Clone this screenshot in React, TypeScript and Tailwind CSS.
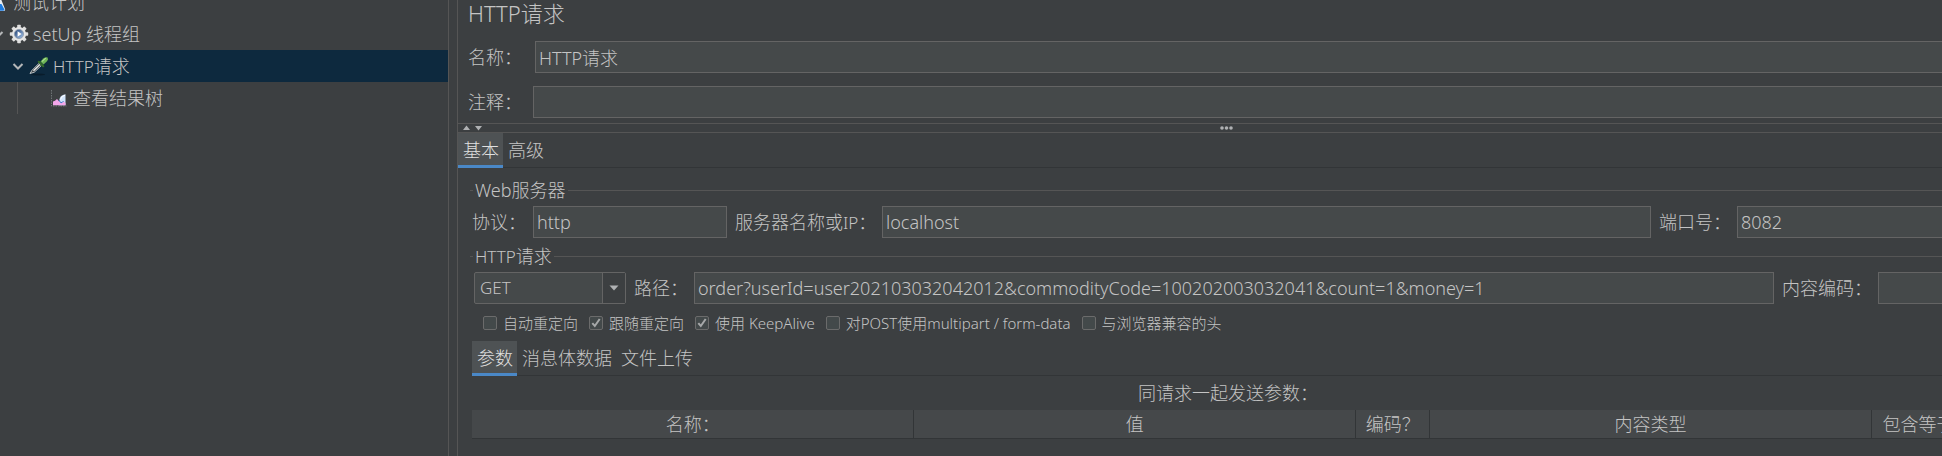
import type { ReactNode } from "react";

const INPUT =
  "h-8 min-w-0 border border-[#646464] bg-[#45494a] px-[3px] text-[18px] leading-[30px] text-[#c4c4c4] outline-none";

/* Latin runs are set one step smaller than the Chinese text around them. */
function Latin({ children }: { children: ReactNode }) {
  return <span className="text-[17px]">{children}</span>;
}

function Chevron() {
  return (
    <svg viewBox="0 0 12 12" className="size-3" fill="none" stroke="#b4b6b8" strokeWidth="2">
      <path d="M1.5 4l4.5 4.5L10.500 4" />
    </svg>
  );
}

function PlanIcon() {
  return (
    <svg viewBox="0 0 20 20" className="size-5">
      <path d="M8 1h4v6l4 10q.6 2-1.500 2h-10Q2.400 19 3 17L8 7z" fill="#e8eef4" />
      <path d="M6 12h6.500l2.900 5.500q0 1.200-1.400 1.200H5z" fill="#1d7be0" />
    </svg>
  );
}

function GearIcon() {
  const teeth = [0, 45, 90, 135, 180, 225, 270, 315];
  return (
    <svg viewBox="0 0 20 20" className="size-5">
      <defs>
        <linearGradient id="hub" x1="0" y1="0" x2="1" y2="1">
          <stop offset="0" stopColor="#1d3d70" />
          <stop offset="1" stopColor="#a9c8ee" />
        </linearGradient>
      </defs>
      {teeth.map((a) => (
        <rect key={a} x="8.200" y=".8" width="3.600" height="4" rx=".8" fill="#dedede" transform={`rotate(${a} 10 10)`} />
      ))}
      <circle cx="10" cy="10" r="7" fill="#e6e6e6" />
      <circle cx="10" cy="10" r="4.600" fill="url(#hub)" stroke="#8d99aa" strokeWidth=".8" />
      <path d="M8.600 7.300l4 2.700-4 2.700z" fill="#fff" />
    </svg>
  );
}

function DropperIcon() {
  return (
    <svg viewBox="0 0 20 20" className="size-5">
      <ellipse cx="9" cy="18.500" rx="7" ry="1" fill="#000" opacity=".3" />
      <path d="M1 17.500l2-3.200 7-7 2.300 2.300-7 6.600z" fill="#3c4347" stroke="#c8ccce" strokeWidth=".9" />
      <path d="M4.500 14.800l6.600-6.400" stroke="#f4f4f4" strokeWidth="1.300" />
      <path d="M9.800 5.800l4.400 4.400" stroke="#356a2b" strokeWidth="2.200" strokeLinecap="round" />
      <path d="M11.500 5.500l3.200-3.300q2.200-1.700 3.900-.6 1.100 1.900-.6 3.700l-3.500 3.200z" fill="#6fb556" />
      <path d="M13.500 5l3-2.600" stroke="#a9dc8f" strokeWidth="1.200" strokeLinecap="round" />
    </svg>
  );
}

function ResultIcon() {
  return (
    <svg viewBox="0 0 20 20" className="size-5">
      <path d="M2.500 2v16h15" fill="none" stroke="#6f7476" strokeWidth="1" strokeDasharray="1.500 1" />
      <path d="M10 13q.5-6 6.500-6.800v11H10z" fill="#cfe3fb" />
      <path d="M11.500 11.500q1-3.500 4.500-4.300" stroke="#fff" fill="none" />
      <path d="M4 17.300v-3.800q2-.5 4-2.500l3.500 4q1.500 1 3-1.500l2 1.500v2.300z" fill="#f3a6ea" />
      <path d="M10 12l1.500 2.500q1.500 1 3-1.500" stroke="#3d6fc4" fill="none" strokeWidth="1" />
    </svg>
  );
}

function TreeRow({
  indent,
  icon,
  open,
  selected,
  children,
}: {
  indent: string;
  icon: ReactNode;
  open?: boolean;
  selected?: boolean;
  children: ReactNode;
}) {
  return (
    <div
      role="treeitem"
      aria-selected={!!selected}
      className={`flex h-8 items-center whitespace-nowrap ${indent} ${selected ? "bg-[#0d293e]" : ""}`}
    >
      <span className="mr-[5px] w-3 shrink-0">{open && <Chevron />}</span>
      <span className="mr-1 shrink-0">{icon}</span>
      <span>{children}</span>
    </div>
  );
}

function Tabs({ items }: { items: string[] }) {
  return (
    <div role="tablist" className="flex h-[35px] bg-[linear-gradient(#323537,#323537)] bg-[length:100%_1px] bg-[position:0_34px] bg-no-repeat">
      {items.map((t, i) => (
        <button
          key={t}
          type="button"
          role="tab"
          aria-selected={i === 0}
          className={
            i === 0
              ? "h-[35px] border-b-[3px] border-[#4a88c7] bg-[#4e5254] pt-[2px] pr-1 pl-[5px] text-[#e0e0e0]"
              : "h-[35px] border-b-[3px] border-transparent pt-[2px] pr-1 pl-[5px]"
          }
        >
          {t}
        </button>
      ))}
    </div>
  );
}

function GroupTitle({ children }: { children: ReactNode }) {
  return (
    <div className="flex h-6 items-center">
      <span className="h-px w-[3px] bg-[#555555]" />
      <h2 className="mr-[2px] ml-[2px] leading-6">{children}</h2>
      <span className="h-px flex-1 bg-[#555555]" />
    </div>
  );
}

function Check({ checked, children }: { checked?: boolean; children: ReactNode }) {
  return (
    <label className="flex items-center gap-[6px] whitespace-nowrap">
      <span className="grid size-[14px] shrink-0">
        <input
          type="checkbox"
          defaultChecked={checked}
          className="peer col-start-1 row-start-1 size-[14px] appearance-none rounded-[2px] border border-[#6b6b6b] bg-[#43494a]"
        />
        <svg
          viewBox="0 0 14 14"
          className="pointer-events-none invisible col-start-1 row-start-1 size-[14px] peer-checked:visible"
          fill="none"
          stroke="#a7a9aa"
          strokeWidth="2"
        >
          <path d="M3.300 7.200l2.500 2.800L10.700 3" />
        </svg>
      </span>
      <span>{children}</span>
    </label>
  );
}

export default function App() {
  return (
    <div className="flex min-h-screen overflow-hidden bg-[#3c3f41] font-['Noto_Sans','Noto_Sans_CJK_SC',sans-serif] text-[18px] leading-6 font-light text-[#c4c4c4]">
      <nav aria-label="测试计划" className="w-[449px] shrink-0 overflow-hidden border-r border-[#555555]">
        <div role="tree" className="-mt-[14px] -ml-12">
          <TreeRow indent="pl-5" icon={<PlanIcon />} open>
            测试计划
          </TreeRow>
          <TreeRow indent="pl-10" icon={<GearIcon />} open>
            setUp 线程组
          </TreeRow>
          <TreeRow indent="pl-[60px]" icon={<DropperIcon />} open selected>
            <Latin>HTTP</Latin>请求
          </TreeRow>
          <div className="ml-[65px] border-l border-[#555555]">
            <TreeRow indent="pl-[14px]" icon={<ResultIcon />}>
              查看结果树
            </TreeRow>
          </div>
        </div>
      </nav>

      <main className="-mr-[53px] ml-2 min-w-0 flex-1 border-l border-[#555555]">
        <header className="pb-[5px] pl-[10px]">
          <h1 className="h-[41px] text-[22px] leading-[26px]">HTTP请求</h1>
          <div className="flex items-center">
            <label htmlFor="name" className="w-[67px] shrink-0">
              名称：
            </label>
            <input id="name" defaultValue="HTTP请求" className={`${INPUT} flex-1`} />
          </div>
          <div className="mt-[13px] flex items-center">
            <label htmlFor="comment" className="w-[65px] shrink-0">
              注释：
            </label>
            <input id="comment" className={`${INPUT} flex-1`} />
          </div>
        </header>

        <div className="grid h-[10px] grid-cols-3 items-center border-y border-[#555555]">
          <svg viewBox="0 0 20 6" className="ml-[5px] h-[6px] w-5" fill="#afb1b3">
            <path d="M0 5l3.500-4.500L7 5zM12 1h7l-3.500 4.500z" />
          </svg>
          <svg viewBox="0 0 13 4" className="h-1 w-[13px] justify-self-center" fill="#afb1b3">
            <circle cx="2" cy="2" r="1.800" />
            <circle cx="6.500" cy="2" r="1.800" />
            <circle cx="11" cy="2" r="1.800" />
          </svg>
        </div>

        <Tabs items={["基本", "高级"]} />

        <section className="pt-[10px] pr-[11px] pl-3">
          <GroupTitle>Web服务器</GroupTitle>
          <div className="mt-1 flex items-center pr-[2px] pl-[2px]">
            <label htmlFor="protocol" className="w-[61px] shrink-0">
              协议：
            </label>
            <input id="protocol" defaultValue="http" className={`${INPUT} w-[194px]`} />
            <label htmlFor="server" className="ml-2 w-[147px] shrink-0">
              服务器名称或<Latin>IP</Latin>：
            </label>
            <input id="server" defaultValue="localhost" className={`${INPUT} flex-1`} />
            <label htmlFor="port" className="ml-2 w-[78px] shrink-0">
              端口号：
            </label>
            <input id="port" defaultValue="8082" className={`${INPUT} w-[245px]`} />
          </div>

          <div className="mt-[6px]">
            <GroupTitle>
              <Latin>HTTP</Latin>请求
            </GroupTitle>
          </div>
          <div className="mt-1 flex items-center pr-[2px] pl-1">
            <div className="grid w-[152px] shrink-0 grid-cols-[minmax(0,1fr)_24px]">
              <select
                aria-label="方法"
                className="col-span-2 col-start-1 row-start-1 h-8 appearance-none rounded-[2px] border border-[#646464] bg-[#45494a] pl-[5px] text-[17px] leading-[30px] text-[#c4c4c4] outline-none"
              >
                <option>GET</option>
              </select>
              <span className="pointer-events-none col-start-2 row-start-1 my-px mr-px flex items-center justify-center border-l border-[#646464] bg-[#3c3f41]">
                <svg viewBox="0 0 10 6" className="h-[6px] w-[10px]" fill="#afb1b3">
                  <path d="M.5.5h9L5 5.500z" />
                </svg>
              </span>
            </div>
            <label htmlFor="path" className="ml-2 w-[60px] shrink-0">
              路径：
            </label>
            <input
              id="path"
              defaultValue="order?userId=user202103032042012&commodityCode=100202003032041&count=1&money=1"
              className={`${INPUT} flex-1`}
            />
            <label htmlFor="encoding" className="ml-2 w-24 shrink-0">
              内容编码：
            </label>
            <input id="encoding" className={`${INPUT} w-[104px]`} />
          </div>

          <div className="mt-[9px] flex h-5 items-center gap-[11px] pl-[13px] text-[15px] leading-5">
            <Check>自动重定向</Check>
            <Check checked>跟随重定向</Check>
            <Check checked>使用 KeepAlive</Check>
            <Check>对POST使用multipart / form-data</Check>
            <Check>与浏览器兼容的头</Check>
          </div>

          <div className="mt-2 pl-[2px]">
            <Tabs items={["参数", "消息体数据", "文件上传"]} />
            <table className="w-full table-fixed border-collapse">
              <caption className="h-[34px] leading-[34px]">同请求一起发送参数：</caption>
              <colgroup>
                <col />
                <col />
                <col className="w-[74px]" />
                <col />
                <col className="w-[112px]" />
              </colgroup>
              <thead>
                <tr className="h-7 bg-[#45484a]">
                  {["名称：", "值", "编码？", "内容类型", "包含等于？"].map((h) => (
                    <th
                      key={h}
                      scope="col"
                      className="border-r border-b border-[#323537] px-0 pt-[2px] pb-0 text-center leading-[25px] font-light whitespace-nowrap"
                    >
                      {h}
                    </th>
                  ))}
                </tr>
              </thead>
            </table>
          </div>
        </section>
      </main>
    </div>
  );
}
